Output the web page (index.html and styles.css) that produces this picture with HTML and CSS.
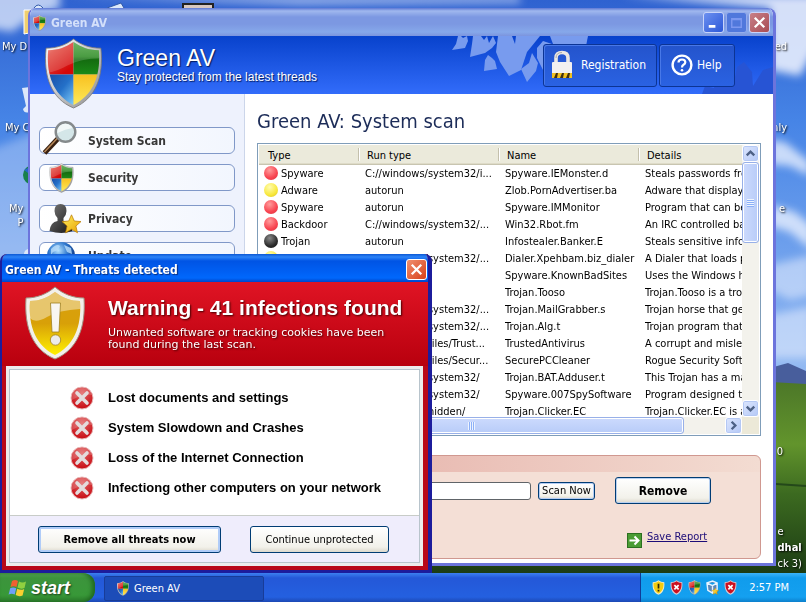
FILE: index.html
```html
<!DOCTYPE html>
<html lang="en">
<head>
<meta charset="utf-8">
<title>Green AV</title>
<link rel="stylesheet" href="styles.css">
</head>
<body>
<svg class="defs" aria-hidden="true">
  <defs>
    <linearGradient id="gRed" x1="0" y1="0" x2="0.6" y2="1"><stop offset="0" stop-color="#f7b0a8"/><stop offset=".4" stop-color="#e24a40"/><stop offset="1" stop-color="#d40808"/></linearGradient>
    <linearGradient id="gGreen" x1="0" y1="0" x2="0" y2="1"><stop offset="0" stop-color="#5cae50"/><stop offset=".5" stop-color="#2a8a20"/><stop offset=".6" stop-color="#146c10"/><stop offset="1" stop-color="#1c8a18"/></linearGradient>
    <linearGradient id="gBlue" x1="0" y1="0" x2="1" y2="1"><stop offset="0" stop-color="#1848a0"/><stop offset=".5" stop-color="#2470c8"/><stop offset="1" stop-color="#8cd8ff"/></linearGradient>
    <linearGradient id="gYellow" x1="0" y1="0" x2="0" y2="1"><stop offset="0" stop-color="#f8c020"/><stop offset="1" stop-color="#fff060"/></linearGradient>
    <linearGradient id="gSilver" x1="0" y1="0" x2="1" y2="1"><stop offset="0" stop-color="#fff"/><stop offset=".5" stop-color="#c8c8c8"/><stop offset="1" stop-color="#8a8a8a"/></linearGradient>
    <linearGradient id="gGold" x1="0" y1="0" x2="0" y2="1"><stop offset="0" stop-color="#d8a010"/><stop offset=".5" stop-color="#d8a008"/><stop offset="1" stop-color="#fff000"/></linearGradient>
    <radialGradient id="gCross" cx=".5" cy=".3" r=".7"><stop offset="0" stop-color="#e06060"/><stop offset="1" stop-color="#c80c14"/></radialGradient>
    <radialGradient id="gGlobe" cx=".4" cy=".3" r=".7"><stop offset="0" stop-color="#b8e4ff"/><stop offset=".5" stop-color="#2a74cc"/><stop offset="1" stop-color="#082870"/></radialGradient>
    <linearGradient id="gStar" x1="0" y1="0" x2="1" y2="1"><stop offset="0" stop-color="#fff060"/><stop offset="1" stop-color="#e8a000"/></linearGradient>
    <linearGradient id="gMan" x1="0" y1="0" x2="1" y2="1"><stop offset="0" stop-color="#777"/><stop offset="1" stop-color="#151515"/></linearGradient>
    <clipPath id="shieldClip"><path d="M28 4C36 9 42 12 53 12C55 36 48 56 28 66C8 56 1 36 3 12C14 12 20 9 28 4Z"/></clipPath>
    <symbol id="shield" viewBox="0 0 56 70">
      <path d="M28 1C36 7 44 10 55 10C58 38 50 60 28 69C6 60-2 38 1 10C12 10 20 7 28 1Z" fill="url(#gSilver)" stroke="#777" stroke-width=".8"/>
      <g clip-path="url(#shieldClip)">
        <path d="M0 0H28V36H0Z" fill="url(#gRed)"/><path d="M28 0H56V36H28Z" fill="url(#gGreen)"/>
        <path d="M0 36H28V70H0Z" fill="url(#gBlue)"/><path d="M28 36H56V70H28Z" fill="url(#gYellow)"/>
        <path d="M0 0H56V20Q36 20 22 27Q10 34 0 34Z" fill="#fff" opacity=".16"/>
      </g>
    </symbol>
    <symbol id="shieldX" viewBox="0 0 56 70">
      <path d="M28 1C36 7 44 10 55 10C58 38 50 60 28 69C6 60-2 38 1 10C12 10 20 7 28 1Z" fill="#d8c8d0"/>
      <path d="M28 6C36 11 42 14 51 14C53 36 46 54 28 63C10 54 3 36 5 14C14 14 20 11 28 6Z" fill="#cc1020"/>
      <path d="M18 24L38 44M38 24L18 44" stroke="#fff" stroke-width="8"/>
    </symbol>
    <symbol id="shieldWarn" viewBox="0 0 60 74">
      <path d="M30 1C38 8 48 12 59 12C61 42 52 64 30 73C8 64-1 42 1 12C12 12 22 8 30 1Z" fill="#f2f0ea" stroke="#a09080" stroke-width="1"/>
      <path d="M30 6C38 12 46 15 55 15C57 42 48 60 30 69C12 60 3 42 5 15C14 15 22 12 30 6Z" fill="url(#gGold)"/>
      <path d="M30 6C38 12 46 15 55 15V23Q34 24 22 31Q10 38 5 32V15C14 15 22 12 30 6Z" fill="#fff" opacity=".4"/>
      <path d="M25.500 17H35.500L34 46H27Z" fill="#f8f6f2" stroke="#a08020" stroke-width=".8"/><circle cx="30.500" cy="54" r="5.200" fill="#ecebe8" stroke="#a08020" stroke-width=".8"/>
    </symbol>
    <symbol id="shieldAlert" viewBox="0 0 56 70">
      <path d="M28 1C36 7 44 10 55 10C58 38 50 60 28 69C6 60-2 38 1 10C12 10 20 7 28 1Z" fill="#f4ecc8"/>
      <path d="M28 6C36 11 42 14 51 14C53 36 46 54 28 63C10 54 3 36 5 14C14 14 20 11 28 6Z" fill="#f4cc10"/>
      <path d="M28 18V40M28 46V54" stroke="#302808" stroke-width="8"/>
    </symbol>
    <symbol id="cross" viewBox="0 0 24 24">
      <circle cx="12" cy="12" r="11" fill="url(#gCross)" stroke="#e8b8b8" stroke-width="1"/>
      <path d="M1.500 12A10.500 10.500 0 0 1 22 9Q12 8 2 14Z" fill="#fff" opacity=".18"/>
      <path d="M7 7L17 17M17 7L7 17" stroke="#e4dcdc" stroke-width="3.600" stroke-linecap="round"/>
    </symbol>
    <symbol id="star" viewBox="0 0 20 20"><path d="M10 .8L12.800 7L19.500 7.600L14.400 12L16 18.800L10 15.200L4 18.800L5.600 12L.5 7.600L7.200 7Z" fill="url(#gStar)" stroke="#b87800" stroke-width=".7"/></symbol>
  </defs>
</svg>

<div class="screen">
  <div class="desktop">
    <svg class="wallpaper" viewBox="0 0 806 573" preserveAspectRatio="none" aria-hidden="true">
      <defs>
        <linearGradient id="sky" x1="0" y1="0" x2="0" y2="1"><stop offset="0" stop-color="#2f62d0"/><stop offset=".3" stop-color="#4684e6"/><stop offset="1" stop-color="#9cc0f4"/></linearGradient>
        <linearGradient id="hill" x1="0" y1="0" x2="0" y2="1"><stop offset="0" stop-color="#4a7428"/><stop offset=".35" stop-color="#62942c"/><stop offset=".6" stop-color="#3c6a20"/><stop offset="1" stop-color="#1c3c14"/></linearGradient>
        <filter id="soft" x="-20%" y="-20%" width="140%" height="140%"><feGaussianBlur stdDeviation="4"/></filter>
      </defs>
      <rect width="806" height="400" fill="url(#sky)"/>
      <g filter="url(#soft)" fill="#f2f6ff">
        <path d="M-10-10H60V8L34 16L12 32L-10 28Z" opacity=".7"/><path d="M60-4H520V3L300 5Z" opacity=".55"/>
        <path d="M620-5H820V40L800 76L770 70V8Z" opacity=".85"/>
        <path d="M-10 150L40 130V260H-10Z" opacity=".3"/>
        <path d="M770 140L785 142L810 162V176L790 166L770 164ZM770 205L795 212L812 226V250L790 232L770 226Z" opacity=".75"/>
        <path d="M770 265L812 255V295L790 300L770 290ZM770 315L812 306V358H770Z" opacity=".5"/>
      </g>
      <path d="M770 368L788 363L806 371V392H770Z" fill="#485e9c"/>
      <path d="M0 400Q400 360 806 384V573H0Z" fill="url(#hill)"/>
      <path d="M776 484L806 486" stroke="#24481a" stroke-width="2"/>
      <path d="M24 10H34V32L24 34Z" fill="#f0cf70" stroke="#fff"/>
      <path d="M22 88L30 87V112Q24 114 23 109L26 106Z" fill="#dce8fa"/>
      <circle cx="33" cy="175" r="10" fill="#18804c"/><path d="M24 170L32 166V176Z" fill="#2868c8"/><circle cx="29" cy="254" r="5" fill="#dce8fa"/>
      <path d="M34 8Q38 2 43 8M107 8L121 3L124 8" fill="#dce8fa" stroke="#3058a8"/>
      <path d="M183 10V4H213V10" fill="#d8c8c0" stroke="#222" stroke-width="2"/>
    </svg>
    <span class="label l1">My D</span><span class="label l2">My C</span>
    <span class="label l3">My<br>P</span>
    <span class="label r1">ed</span><span class="label r2">nly</span><span class="label r3">e</span><span class="label r4">0</span>
    <p class="label owner">e<br><b>dhal</b><br>ck 3)</p>

    <section class="window" aria-label="Green AV">
      <div class="titlebar">
        <svg class="ico-small" aria-hidden="true"><use href="#shield"/></svg>
        <span class="window-name">Green AV</span>
        <div class="window-buttons">
          <button class="wbtn" aria-label="Minimize"><svg viewBox="0 0 20 20"><path d="M5 14H12" stroke="#fff" stroke-width="3"/></svg></button>
          <button class="wbtn dim" aria-label="Maximize"><svg viewBox="0 0 20 20"><path d="M5 6H15V15H5ZM5 7H15" fill="none" stroke="#7c98f0" stroke-width="1.500"/></svg></button>
          <button class="wbtn close" aria-label="Close"><svg viewBox="0 0 20 20"><path d="M5 5L15 15M15 5L5 15" stroke="#fff" stroke-width="2.400"/></svg></button>
        </div>
      </div>
      <header class="banner">
        <svg class="leaves" viewBox="0 0 136 58" aria-hidden="true"><g fill="#789bee">
          <path d="M6 0L4 8L0 14L13 12L16 5L15 0L11 2L9 0Z"/><path d="M21 0L20 8L18 21L33 17L40 12L44 7L41 0L37 7L35 0L32 4L29 0Z"/>
          <path d="M36 19L33 24L32 35L45 33L43 25L40 22Z" /><path d="M46 0L44 16L48 26L57 40L69 34L75 16L88 0L64 0L63 8L60 0Z"/>
          <path d="M80 17L77 27L69 33L75 46L84 35L86 27Z"/><path d="M91 5L85 12L85 22L93 38L95 20L100 8Z"/><path d="M98 0H136L134 10L128 20L104 16Z"/>
        </g></svg>
        <svg class="leaves-low" viewBox="0 0 76 32" aria-hidden="true"><path d="M5 32L8 24L17 26L20 12L28 7L38 15L40 5L47 0L55 10L56 24L66 8L76 5V32Z" fill="#2754d4"/></svg>
        <svg class="logo" aria-hidden="true"><use href="#shield"/></svg>
        <div class="brand"><strong>Green AV</strong><span>Stay protected from the latest threads</span></div>
        <button class="hbtn">
          <svg width="22" height="30" viewBox="0 0 22 30" aria-hidden="true"><path d="M5 14V8Q5 2.500 11 2.500Q17 2.500 17 8V14" fill="none" stroke="#ece8e4" stroke-width="3.600"/><path d="M5 8Q5 2.500 11 2.500" fill="none" stroke="#b0aca8" stroke-width="1"/><rect x="1" y="12" width="20" height="16" rx="1" fill="#f2f0f0"/><path d="M1 23H21V28H1Z" fill="#f0c020"/><path d="M3 28L5 23H7L6 28ZM9 28L11 23H13L12 28ZM15 28L17 23H19L18 28Z" fill="#403010"/></svg>
          Registration</button>
        <button class="hbtn help">
          <svg width="22" height="22" viewBox="0 0 22 22" aria-hidden="true"><circle cx="11" cy="11" r="9.400" fill="none" stroke="#fff" stroke-width="2.400"/><path d="M7.500 8.500Q7.500 5.500 11 5.500Q14.300 5.500 14.300 8.300Q14.300 9.800 12.500 10.800Q11 11.600 11 13.400" fill="none" stroke="#fff" stroke-width="2.200"/><circle cx="11" cy="16.200" r="1.300" fill="#fff"/></svg>
          Help</button>
      </header>
      <div class="body">
        <nav class="sidebar">
          <button class="nav"><svg class="nav-icon lens" viewBox="0 0 36 36" aria-hidden="true"><path d="M3 33L17 18" stroke="#382010" stroke-width="5"/><path d="M3 32L17 17" stroke="#b88858" stroke-width="1.500"/><circle cx="24" cy="12" r="9.800" fill="#d4e6e8" stroke="#858a8c" stroke-width="2.400"/><path d="M16 13A8 8 0 0 1 31 8Q24 9 16 13Z" fill="#fff" opacity=".7"/></svg>System Scan</button>
          <button class="nav"><svg class="nav-icon" aria-hidden="true"><use href="#shield"/></svg>Security</button>
          <button class="nav gap"><svg class="nav-icon man" viewBox="0 0 34 32" aria-hidden="true"><path d="M12 1Q18 1 18 8Q18 12 15 15V18Q23 19 24 28Q13 32 1 28Q2 19 9 18V15Q6 12 6 8Q6 1 12 1Z" fill="url(#gMan)"/><use href="#star" x="13" y="11" width="20" height="20"/></svg>Privacy</button>
          <button class="nav"><svg class="nav-icon globe" viewBox="0 0 30 30" aria-hidden="true"><circle cx="15" cy="15" r="14" fill="url(#gGlobe)"/><path d="M5 8Q11 2 14 5L12 9L7 11L5 14ZM18 4L25 7L26 13L21 11Z" fill="#b8dcfa" opacity=".8"/></svg>Update</button>
        </nav>
        <main class="content">
          <h1>Green AV: System scan</h1>
          <div class="list">
            <div class="viewport">
              <table>
                <colgroup><col class="c1"><col class="c2"><col class="c2"><col></colgroup>
                <thead><tr><th>Type</th><th>Run type</th><th>Name</th><th>Details</th></tr></thead>
                <tbody>
                  <tr><td><i class="dot red"></i>Spyware</td><td>C://windows/system32/i...</td><td>Spyware.IEMonster.d</td><td>Steals passwords from</td></tr>
                  <tr><td><i class="dot yellow"></i>Adware</td><td>autorun</td><td>Zlob.PornAdvertiser.ba</td><td>Adware that displays</td></tr>
                  <tr><td><i class="dot red"></i>Spyware</td><td>autorun</td><td>Spyware.IMMonitor</td><td>Program that can be</td></tr>
                  <tr><td><i class="dot red"></i>Backdoor</td><td>C://windows/system32/...</td><td>Win32.Rbot.fm</td><td>An IRC controlled back</td></tr>
                  <tr><td><i class="dot black"></i>Trojan</td><td>autorun</td><td>Infostealer.Banker.E</td><td>Steals sensitive infor</td></tr>
                  <tr><td><i class="dot yellow"></i></td><td>C://windows/system32/...</td><td>Dialer.Xpehbam.biz_dialer</td><td>A Dialer that loads p</td></tr>
                  <tr><td></td><td></td><td>Spyware.KnownBadSites</td><td>Uses the Windows h</td></tr>
                  <tr><td></td><td></td><td>Trojan.Tooso</td><td>Trojan.Tooso is a troj</td></tr>
                  <tr><td></td><td>C://windows/system32/...</td><td>Trojan.MailGrabber.s</td><td>Trojan horse that ge</td></tr>
                  <tr><td></td><td>C://windows/system32/...</td><td>Trojan.Alg.t</td><td>Trojan program that</td></tr>
                  <tr><td></td><td>C://Program Files/Trust...</td><td>TrustedAntivirus</td><td>A corrupt and mislea</td></tr>
                  <tr><td></td><td>C://Program Files/Secur...</td><td>SecurePCCleaner</td><td>Rogue Security Softw</td></tr>
                  <tr><td></td><td>C://windows/system32/</td><td>Trojan.BAT.Adduser.t</td><td>This Trojan has a ma</td></tr>
                  <tr><td></td><td>C://windows/system32/</td><td>Spyware.007SpySoftware</td><td>Program designed to</td></tr>
                  <tr><td></td><td>C://windows/hidden/</td><td>Trojan.Clicker.EC</td><td>Trojan.Clicker.EC is a</td></tr>
                </tbody>
              </table>
            </div>
            <div class="vbar">
              <button class="sbtn" aria-label="Scroll up"><svg viewBox="0 0 16 16"><path d="M4 10L8 6L12 10"/></svg></button>
              <div class="thumb"><i class="grip"></i></div>
              <button class="sbtn end" aria-label="Scroll down"><svg viewBox="0 0 16 16"><path d="M4 6L8 10L12 6"/></svg></button>
            </div>
            <div class="hbar">
              <div class="thumb"><i class="grip"></i></div>
              <button class="sbtn end" aria-label="Scroll right"><svg viewBox="0 0 16 16"><path d="M6 4L10 8L6 12"/></svg></button>
            </div>
            <div class="corner"></div>
          </div>
          <div class="panel">
            <div class="scanrow">
              <input type="text" aria-label="Scan path">
              <button class="xp small">Scan Now</button>
              <button class="xp big">Remove</button>
            </div>
            <a class="report" href="#report"><svg viewBox="0 0 15 15" aria-hidden="true"><rect x=".5" y=".5" width="14" height="14" fill="#4a9c34" stroke="#2c7020"/><path d="M2.500 7.500H11M7.500 3.500L11.500 7.500L7.500 11.500" fill="none" stroke="#fff" stroke-width="2"/></svg><span>Save Report</span></a>
          </div>
        </main>
      </div>
    </section>

    <section class="dialog" role="dialog" aria-label="Threats detected">
      <div class="dialog-title"><span>Green AV - Threats detected</span>
        <button class="wbtn close" aria-label="Close"><svg viewBox="0 0 20 20"><path d="M5 5L15 15M15 5L5 15" stroke="#fff" stroke-width="2.400"/></svg></button>
      </div>
      <div class="alert">
        <div class="alert-head">
          <svg class="alert-shield" aria-hidden="true"><use href="#shieldWarn"/></svg>
          <div><h2>Warning - 41 infections found</h2><p>Unwanted software or tracking cookies have been<br>found during the last scan.</p></div>
        </div>
        <div class="sheet"><div class="sheet-in">
          <ul>
            <li><svg aria-hidden="true"><use href="#cross"/></svg>Lost documents and settings</li>
            <li><svg aria-hidden="true"><use href="#cross"/></svg>System Slowdown and Crashes</li>
            <li><svg aria-hidden="true"><use href="#cross"/></svg>Loss of the Internet Connection</li>
            <li><svg aria-hidden="true"><use href="#cross"/></svg>Infectiong other computers on your network</li>
          </ul>
          <div class="actions"><button class="xp default">Remove all threats now</button><button class="xp plain">Continue unprotected</button></div>
        </div></div>
      </div>
    </section>
  </div>

  <footer class="taskbar">
    <button class="start"><svg viewBox="0 0 20 18" aria-hidden="true"><path d="M4 2Q7 0 10 2L8.500 8Q5.500 6.500 2.500 8Z" fill="#f06030"/><path d="M11 2.500Q14.500 4.500 18 2.500L16.500 9Q13 10.500 9.500 8.600Z" fill="#90d040"/><path d="M2.200 9.200Q5 7.700 8.200 9.200L6.700 15.500Q3.500 14 .6 15.500Z" fill="#70a0f8"/><path d="M9.200 9.800Q13 11.800 16.200 10L14.600 16.500Q11 18 7.700 16Z" fill="#f8d030"/></svg><span>start</span></button>
    <button class="task"><svg aria-hidden="true"><use href="#shield"/></svg>Green AV</button>
    <div class="tray">
      <svg aria-hidden="true"><use href="#shieldAlert"/></svg>
      <svg aria-hidden="true"><use href="#shieldX"/></svg>
      <svg aria-hidden="true"><use href="#shield"/></svg>
      <svg viewBox="0 0 14 16" aria-hidden="true"><path d="M1 3L7 1L12 3V10L7 14L2 11ZM1 3L7 6L12 3M7 6V14" fill="#5c88b8" stroke="#e8f4ff" stroke-width="1.500"/><use href="#star" x="6" y="8" width="8" height="8"/></svg>
      <svg aria-hidden="true"><use href="#shieldX"/></svg>
      <time>2:57 PM</time>
    </div>
  </footer>
</div>
</body>
</html>
```
FILE: styles.css
```css
* { box-sizing: border-box; }
html, body { height: 100%; margin: 0; }
body { font: 11px/16px "DejaVu Sans Condensed", "DejaVu Sans", sans-serif; color: #000; overflow: hidden; }
button, input { font: inherit; color: inherit; margin: 0; }
button { padding: 0; white-space: nowrap; }
.defs { position: absolute; width: 0; height: 0; }
.screen { height: 100vh; display: flex; flex-direction: column; }
.desktop { position: relative; flex: 1; min-height: 0; overflow: hidden; background: #4c86e4; }
.wallpaper { position: absolute; width: 100%; height: 100%; }

.label { position: absolute; margin: 0; color: #fff; line-height: 14px; text-shadow: 1px 1px 2px #000; }
.l1 { left: 2px; top: 40px; }
.l2 { left: 5px; top: 121px; }
.l3 { left: 9px; top: 202px; text-align: right; }
.r1 { right: 19px; top: 40px; }
.r2 { right: 19px; top: 121px; }
.r3 { right: 21px; top: 202px; }
.r4 { right: 23px; top: 445px; }
.owner { right: 4px; bottom: 1px; line-height: 16px; }

/* main window */
.window { position: absolute; left: 28px; right: 30px; top: 8px; bottom: 7px; display: flex; flex-direction: column; border: solid #6c74dc; border-width: 0 3px 3px 2px; border-radius: 8px 8px 0 0; background: #fff; overflow: hidden; }
.titlebar { flex: none; height: 28px; display: flex; align-items: center; gap: 5px; padding: 1px 3px 0 3px; background: linear-gradient(#5e78d4, #a0b8ee 3px, #7c98e2 9px, #7c98e2 16px, #86a8ea 24px, #7c94de); }
.ico-small { width: 13px; height: 16px; }
.window-name { flex: 1; color: #d4e0fa; font: bold 12px/16px "DejaVu Sans Condensed", sans-serif; }
.window-buttons { display: flex; gap: 2px; }
.wbtn { width: 21px; height: 21px; border: 1px solid #c8d4fa; border-radius: 3px; background: linear-gradient(135deg, #6c90f0, #2c58d8); }
.wbtn svg { display: block; width: 19px; height: 19px; }
.wbtn.dim { background: #5078dc; border-color: #94acec; }
.wbtn.close { background: linear-gradient(135deg, #c88088, #a84c54); }

.banner { position: relative; flex: none; height: 58px; display: flex; align-items: center; padding: 0 38px 0 87px; color: #fff; background: linear-gradient(#0842cc, #326cfa); }
.leaves { position: absolute; right: 185px; top: 0; width: 136px; height: 58px; }
.leaves-low { position: absolute; right: 0; bottom: 0; width: 76px; height: 32px; }
.logo { position: absolute; left: 15px; top: 2px; width: 57px; height: 71px; }
.brand { flex: 1; text-shadow: 1px 1px 1px #021c60; font-family: "Liberation Sans", sans-serif; white-space: nowrap; }
.brand strong { display: block; font-weight: normal; font-size: 23px; line-height: 24px; }
.brand span { display: block; font-size: 12px; line-height: 14px; }
.hbtn { position: relative; display: flex; align-items: center; gap: 8px; height: 43px; width: 114px; padding-left: 7px; margin-right: 2px; font-size: 12px; color: #fff; border: 1px solid #0c3494; border-radius: 3px; background: linear-gradient(#2454cc, #2a62e2); box-shadow: inset 1px 1px 0 #4878e8; }
.hbtn.help { width: 76px; padding-left: 11px; gap: 4px; margin-right: 0; }

.body { flex: 1; min-height: 0; display: flex; }
.sidebar { flex: none; width: 215px; display: flex; flex-direction: column; gap: 10px; padding: 33px 9px 0 9px; background: #eef2fd; border-right: 1px solid #ccd6ea; }
.nav { position: relative; flex: none; height: 27px; padding-left: 48px; text-align: left; font-size: 12px; font-weight: bold; color: #383838; border: 1px solid #8098c8; border-radius: 6px; background: linear-gradient(90deg, #fff, #f2f6fe); }
.nav.gap { margin-top: 4px; }
.nav-icon { position: absolute; left: 9px; top: -2px; width: 25px; height: 30px; }
.nav-icon.lens { left: 1px; top: -8px; width: 37px; height: 36px; }
.nav-icon.man { left: 8px; top: -3px; width: 35px; height: 32px; }
.nav-icon.globe { left: 6px; width: 30px; height: 30px; }

.content { flex: 1; min-width: 0; display: flex; flex-direction: column; padding: 0 12px 4px 12px; }
h1 { margin: 0; padding-top: 14px; height: 49px; font-weight: normal; font-size: 20px; line-height: 26px; color: #1c2c58; white-space: nowrap; }
.list { flex: 1; min-height: 0; display: grid; grid-template: 1fr 17px / 1fr 17px; border: 1px solid #7f9db9; padding: 1px; }
.viewport { min-width: 0; min-height: 0; overflow: hidden; }
table { width: 100%; table-layout: fixed; border-collapse: collapse; }
.c1 { width: 99px; }
.c2 { width: 140px; }
th { position: relative; height: 20px; padding: 1px 0 0 9px; text-align: left; font-weight: normal; white-space: nowrap; background: #ebeadb; box-shadow: inset 0 -1px 0 #c8c5b0, inset 0 -2px 0 #dedbc8; }
th + th::before { content: ""; position: absolute; left: 0; top: 3px; height: 13px; border-left: 1px solid #c4c0ac; border-right: 1px solid #fff; }
td { height: 17px; padding: 1px 0 0 7px; overflow: hidden; white-space: nowrap; line-height: 16px; }
td:first-child { padding-left: 5px; }
.dot { display: inline-block; width: 14px; height: 14px; margin-right: 3px; border-radius: 50%; vertical-align: top; }
.dot.red { background: radial-gradient(circle at 40% 30%, #ff9c9c, #f84450 60%, #d83040); }
.dot.yellow { background: radial-gradient(circle at 40% 30%, #fffcb0, #f8e83c 60%, #d8c020); }
.dot.black { background: radial-gradient(circle at 40% 30%, #888, #2c2c2c 60%, #101010); }
.vbar, .hbar { display: flex; background: #f3f2ec; }
.vbar { flex-direction: column; }
.sbtn { flex: none; width: 17px; height: 17px; border: 1px solid #fff; border-radius: 3px; background: linear-gradient(135deg, #dce6fe, #b4c8f6); box-shadow: inset 0 0 0 1px #b4c8f4; }
.sbtn svg { display: block; width: 15px; height: 15px; fill: none; stroke: #4d6185; stroke-width: 2.500; }
.end { margin-left: auto; }
.vbar .end { margin-top: auto; margin-left: 0; }
.thumb { display: flex; align-items: center; justify-content: center; border: 1px solid #98b0e8; border-radius: 3px; box-shadow: inset 0 0 0 1px #fff; background: linear-gradient(90deg, #ccdafd, #b8ccf8); }
.vbar .thumb { height: 81px; }
.hbar .thumb { width: 88%; background: linear-gradient(#ccdafd, #b8ccf8); }
.grip { width: 7px; height: 8px; background: repeating-linear-gradient(#eef4fe 0 1px, #8cb0f8 1px 2px); }
.hbar .grip { background: repeating-linear-gradient(90deg, #eef4fe 0 1px, #8cb0f8 1px 2px); }
.corner { background: #ece9d8; }

.panel { flex: none; height: 104px; margin-top: 19px; padding: 21px 49px 0 16px; border: 1px solid #d09890; border-radius: 6px; background: linear-gradient(90deg, #e4aca4, #f3dcd2) 0 0 / 100% 16px no-repeat, #f4dfd6; }
.scanrow { display: flex; align-items: center; }
.scanrow input { flex: 1; min-width: 0; height: 18px; border: 1px solid #606468; border-radius: 3px; background: #fff; }
.xp { border: 1px solid #003c74; border-radius: 3px; background: linear-gradient(#fff, #f2f1ea 80%, #dcd8cc); }
.small { width: 57px; height: 18px; margin: 0 20px 0 7px; box-shadow: inset 0 0 0 1px #b4ccf4; line-height: 14px; }
.big { width: 96px; height: 27px; font-size: 12px; font-weight: bold; box-shadow: inset 0 0 0 1px #b8d0f0; }
.report { display: flex; width: 84px; margin: 25px 0 0 auto; gap: 5px; color: #1c0c78; white-space: nowrap; }
.report svg { width: 15px; height: 15px; margin-top: 4px; flex: none; }

/* alert dialog */
.dialog { position: absolute; left: 0; bottom: 0; width: 432px; border: solid #1c1c9c; border-width: 0 4px 3px 2px; border-radius: 7px 7px 0 0; background: #b80818; overflow: hidden; }
.dialog-title { height: 28px; margin: 0 -4px 0 -2px; display: flex; align-items: center; justify-content: space-between; padding: 3px 5px 0 5px; color: #fff; background: linear-gradient(#0c58d4, #2c84f8 3px, #0054e4 7px, #0060f4 18px, #0068fc 24px, #0044c8); }
.dialog-title span { font: bold 12px/16px "DejaVu Sans Condensed", sans-serif; text-shadow: 1px 1px 1px #042c80; }
.dialog .wbtn.close { border-color: #fff; background: linear-gradient(135deg, #f09070, #d84018); }
.alert { padding: 0 5px 4px 4px; }
.alert-head { display: flex; height: 84px; margin: 0 -5px 0 -4px; padding: 4px 0 0 23px; gap: 23px; color: #fff; text-shadow: 1px 1px 2px #400; background: linear-gradient(#e01424, #b8000e); }
.alert-shield { flex: none; width: 60px; height: 74px; }
h2 { margin: 10px 0 7px; font: bold 21px/24px "Liberation Sans", sans-serif; white-space: nowrap; }
.alert-head p { margin: 0; font: 11px/12px "DejaVu Sans", sans-serif; white-space: nowrap; }
.sheet { padding: 3px; background: #ececec; }
.sheet-in { border: 1px solid #b8c4cc; background: #fff; }
ul { list-style: none; margin: 0; padding: 13px 0 12px 60px; }
li { display: flex; align-items: center; gap: 14px; height: 30px; font: bold 13px/16px "Liberation Sans", sans-serif; white-space: nowrap; }
li svg { width: 24px; height: 24px; }
.actions { display: flex; gap: 29px; height: 47px; padding: 10px 28px; background: #efedfc; border-top: 1px solid #c8ccc8; }
.default { width: 183px; height: 27px; font-weight: bold; box-shadow: inset 0 0 0 2px #b0ccf8; }
.plain { width: 139px; height: 27px; }

/* taskbar */
.taskbar { flex: none; height: 29px; display: flex; align-items: stretch; color: #fff; background: linear-gradient(#3c80f0, #2458d8 5px, #2460e0 24px, #1c48b4); }
.start { width: 95px; display: flex; align-items: center; gap: 3px; padding-left: 8px; border: 0; border-radius: 0 12px 12px 0; background: linear-gradient(#58a858, #3c943c 5px, #389838 22px, #2c7c2c); box-shadow: inset -3px 0 4px #206820; font: italic bold 18px/20px "Liberation Sans", sans-serif; text-shadow: 1px 1px 2px #1c3c1c; }
.start svg { width: 20px; height: 18px; }
.task { display: flex; align-items: center; gap: 5px; width: 160px; height: 25px; margin: 3px 0 0 9px; padding-left: 12px; border: 1px solid #183c98; border-radius: 2px; background: #1c4cb8; }
.task svg { width: 12px; height: 15px; }
.tray { display: flex; align-items: center; gap: 5px; margin-left: auto; padding: 0 17px 0 11px; border-left: 1px solid #103c98; background: linear-gradient(#3cb4f8, #109cec 5px, #14a0f0 24px, #0c80cc); }
.tray svg { width: 13px; height: 15px; }
time { margin-left: 7px; }
```
